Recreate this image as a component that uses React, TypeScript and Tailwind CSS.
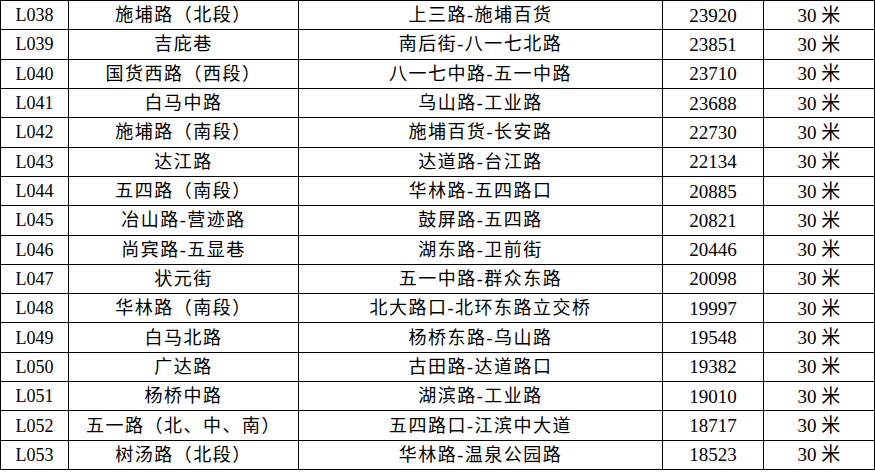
const rows: [string, string, string, string][] = [
  ["L038", "施埔路（北段）", "上三路-施埔百货", "23920"],
  ["L039", "吉庇巷", "南后街-八一七北路", "23851"],
  ["L040", "国货西路（西段）", "八一七中路-五一中路", "23710"],
  ["L041", "白马中路", "乌山路-工业路", "23688"],
  ["L042", "施埔路（南段）", "施埔百货-长安路", "22730"],
  ["L043", "达江路", "达道路-台江路", "22134"],
  ["L044", "五四路（南段）", "华林路-五四路口", "20885"],
  ["L045", "冶山路-营迹路", "鼓屏路-五四路", "20821"],
  ["L046", "尚宾路-五显巷", "湖东路-卫前街", "20446"],
  ["L047", "状元街", "五一中路-群众东路", "20098"],
  ["L048", "华林路（南段）", "北大路口-北环东路立交桥", "19997"],
  ["L049", "白马北路", "杨桥东路-乌山路", "19548"],
  ["L050", "广达路", "古田路-达道路口", "19382"],
  ["L051", "杨桥中路", "湖滨路-工业路", "19010"],
  ["L052", "五一路（北、中、南）", "五四路口-江滨中大道", "18717"],
  ["L053", "树汤路（北段）", "华林路-温泉公园路", "18523"],
];

export default function App() {
  return (
    <div className="w-[875px] h-[472px] bg-white overflow-hidden">
      <table
        className="border-collapse table-fixed w-[874px] text-[18px] text-black"
        style={{ fontFamily: '"Liberation Serif", "Noto Sans CJK SC", serif' }}
      >
        <colgroup>
          <col className="w-[68px]" />
          <col className="w-[230px]" />
          <col className="w-[364px]" />
          <col className="w-[101px]" />
          <col className="w-[111px]" />
        </colgroup>
        <tbody>
          {rows.map(([code, name, route, count]) => (
            <tr key={code} className="h-[29.3125px]">
              <td className="border border-black text-center p-0 leading-none">{code}</td>
              <td className="border border-black text-center p-0 leading-none tracking-[1.5px]">{name}</td>
              <td className="border border-black text-center p-0 leading-none tracking-[1.5px]">{route}</td>
              <td className="border border-black text-center p-0 leading-none text-[19px]">{count}</td>
              <td className="border border-black text-center p-0 leading-none text-[19px]">30 米</td>
            </tr>
          ))}
        </tbody>
      </table>
    </div>
  );
}
